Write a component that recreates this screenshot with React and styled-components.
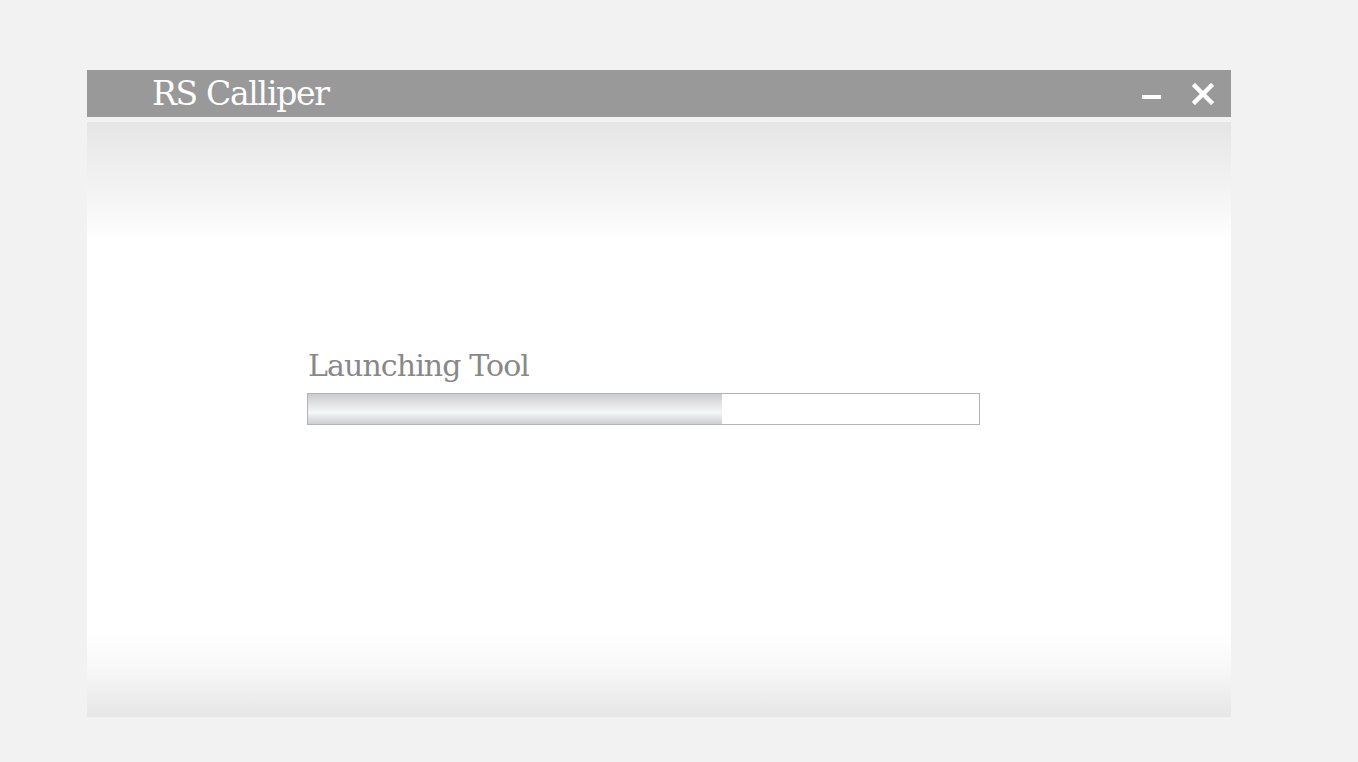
import React from "react";
import styled, { createGlobalStyle } from "styled-components";

const Global = createGlobalStyle`
  html, body { margin: 0; padding: 0; background: #f2f2f2; }
  body { font-family: "DejaVu Serif", serif; }
`;

const Page = styled.div`
  width: 1358px;
  height: 762px;
  padding: 70px 0 0 87px;
  box-sizing: border-box;
`;

const Window = styled.div`
  width: 1144px;
  display: flex;
  flex-direction: column;
  gap: 5px;
`;

const TitleBar = styled.div`
  height: 47px;
  background: #999999;
  display: flex;
  align-items: center;
  padding: 0 17px 0 65px;
  box-sizing: border-box;
`;

const Title = styled.div`
  flex: 1;
  color: #ffffff;
  font-family: "DejaVu Serif", serif;
  font-size: 33px;
  letter-spacing: -1.3px;
  line-height: 47px;
  margin-top: 0px;
`;

const Controls = styled.div`
  display: flex;
  align-items: center;
  gap: 31px;
`;

const IconButton = styled.button`
  background: none;
  border: 0;
  padding: 0;
  width: ${(p) => p.$w}px;
  height: 22px;
  display: flex;
  align-items: center;
  justify-content: center;
  cursor: pointer;
`;

const Body = styled.div`
  height: 595px;
  background: linear-gradient(
    to bottom,
    #e5e5e5 0px,
    #f6f6f6 80px,
    #ffffff 120px,
    #ffffff 510px,
    #f8f8f8 545px,
    #e6e6e6 595px
  );
  display: flex;
  flex-direction: column;
  padding: 226px 0 0 220px;
  box-sizing: border-box;
`;

const Label = styled.div`
  color: #888888;
  font-family: "DejaVu Serif", serif;
  font-size: 30px;
  letter-spacing: -0.9px;
  line-height: 36px;
  margin-left: 1px;
`;

const Track = styled.div`
  margin-top: 9px;
  width: 673px;
  height: 32px;
  border: 1px solid #b3b3b3;
  box-sizing: border-box;
  background: #ffffff;
`;

const Fill = styled.div`
  height: 100%;
  background: linear-gradient(
    to bottom,
    #c9cbcc 0%,
    #e2e4e5 35%,
    #f4f7f8 62%,
    #e0e2e3 80%,
    #cdcfd0 100%
  );
`;

export default function App() {
  const progress = 414 / 671;
  return (
    <>
      <Global />
      <Page>
        <Window>
          <TitleBar>
            <Title>RS Calliper</Title>
            <Controls>
              <IconButton $w={19} aria-label="minimize">
                <svg width="19" height="22" viewBox="0 0 19 22">
                  <rect x="0" y="12" width="19" height="4" fill="#fff" />
                </svg>
              </IconButton>
              <IconButton $w={22} aria-label="close">
                <svg width="22" height="22" viewBox="0 0 22 22">
                  <path d="M3 3 L19 19 M19 3 L3 19" stroke="#fff" strokeWidth="4.5" strokeLinecap="square" />
                </svg>
              </IconButton>
            </Controls>
          </TitleBar>
          <Body>
            <Label>Launching Tool</Label>
            <Track>
              <Fill style={{ width: `${progress * 100}%` }} />
            </Track>
          </Body>
        </Window>
      </Page>
    </>
  );
}
